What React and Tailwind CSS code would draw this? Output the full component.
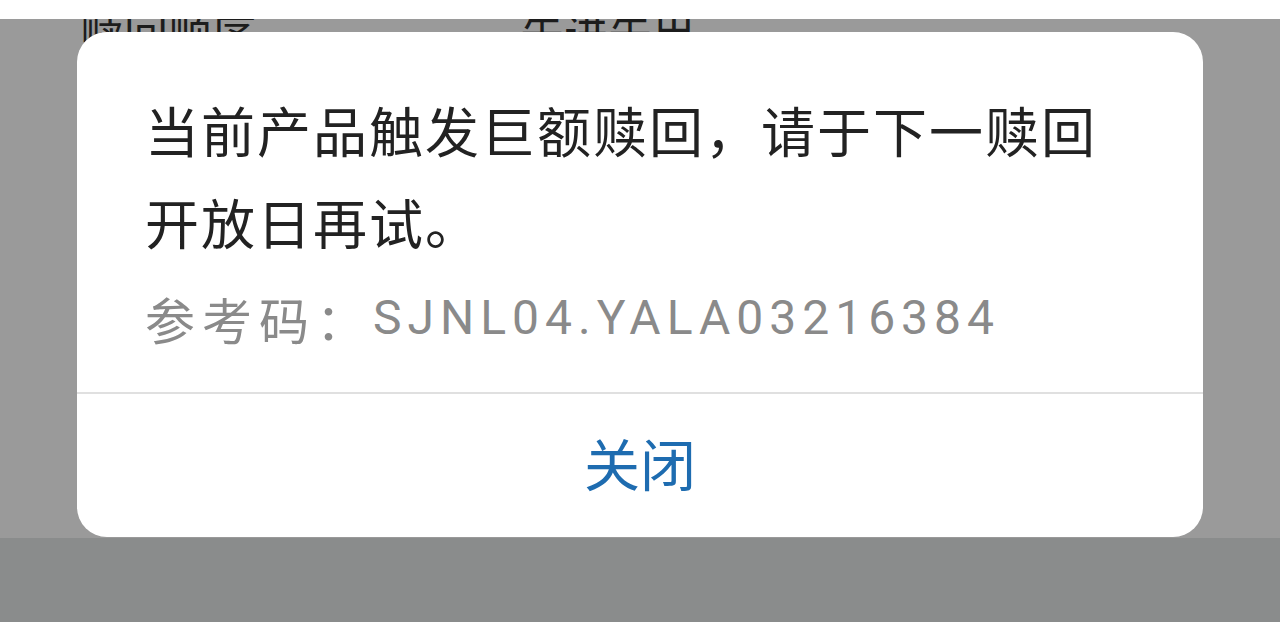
import React from "react"

const cjk = { fontFamily: '"Noto Sans CJK SC", "Noto Sans", sans-serif' }
const code = { fontFamily: 'Roboto, "Noto Sans CJK SC", sans-serif' }

export default function App() {
  return (
    <div className="w-[1280px] h-[640px] flex flex-col bg-white overflow-hidden" style={cjk}>
      <div className="h-[19px] bg-white" />

      {/* page behind the modal, dimmed */}
      <div className="relative h-[519px] bg-[#9a9a9a] overflow-hidden">
        <div className="-mt-[10px] flex text-[44px] leading-[44px] text-[#1c1c1c]">
          <span className="ml-[80px] w-[440px]">赎回顺序</span>
          <span>先进先出</span>
        </div>

        {/* dialog */}
        <div className="absolute left-[77px] right-[77px] top-[13px] bottom-[1px] bg-white rounded-[30px] flex flex-col">
          <div className="px-[68px] pt-[52px] pb-[44px] border-b-2 border-[#e0e0e0]">
            <p className="text-[54px] leading-[92px] tracking-[2px] text-[#222222]">
              当前产品触发巨额赎回，请于下一赎回
              <br />
              开放日再试。
            </p>
            <p className="mt-[20px] text-[#8a8a8a] flex items-center h-[60px]">
              <span className="text-[50px] tracking-[7px]">参考码：</span>
              <span className="text-[48px] tracking-[6px]" style={code}>SJNL04.YALA03216384</span>
            </p>
          </div>
          <button className="flex-1 flex items-center justify-center pb-[8px] text-[56px] text-[#1e6cb0]">
            关闭
          </button>
        </div>
      </div>

      <div className="h-[84px] bg-[#8a8c8c]" />
      <div className="flex-1 bg-white" />
    </div>
  )
}
